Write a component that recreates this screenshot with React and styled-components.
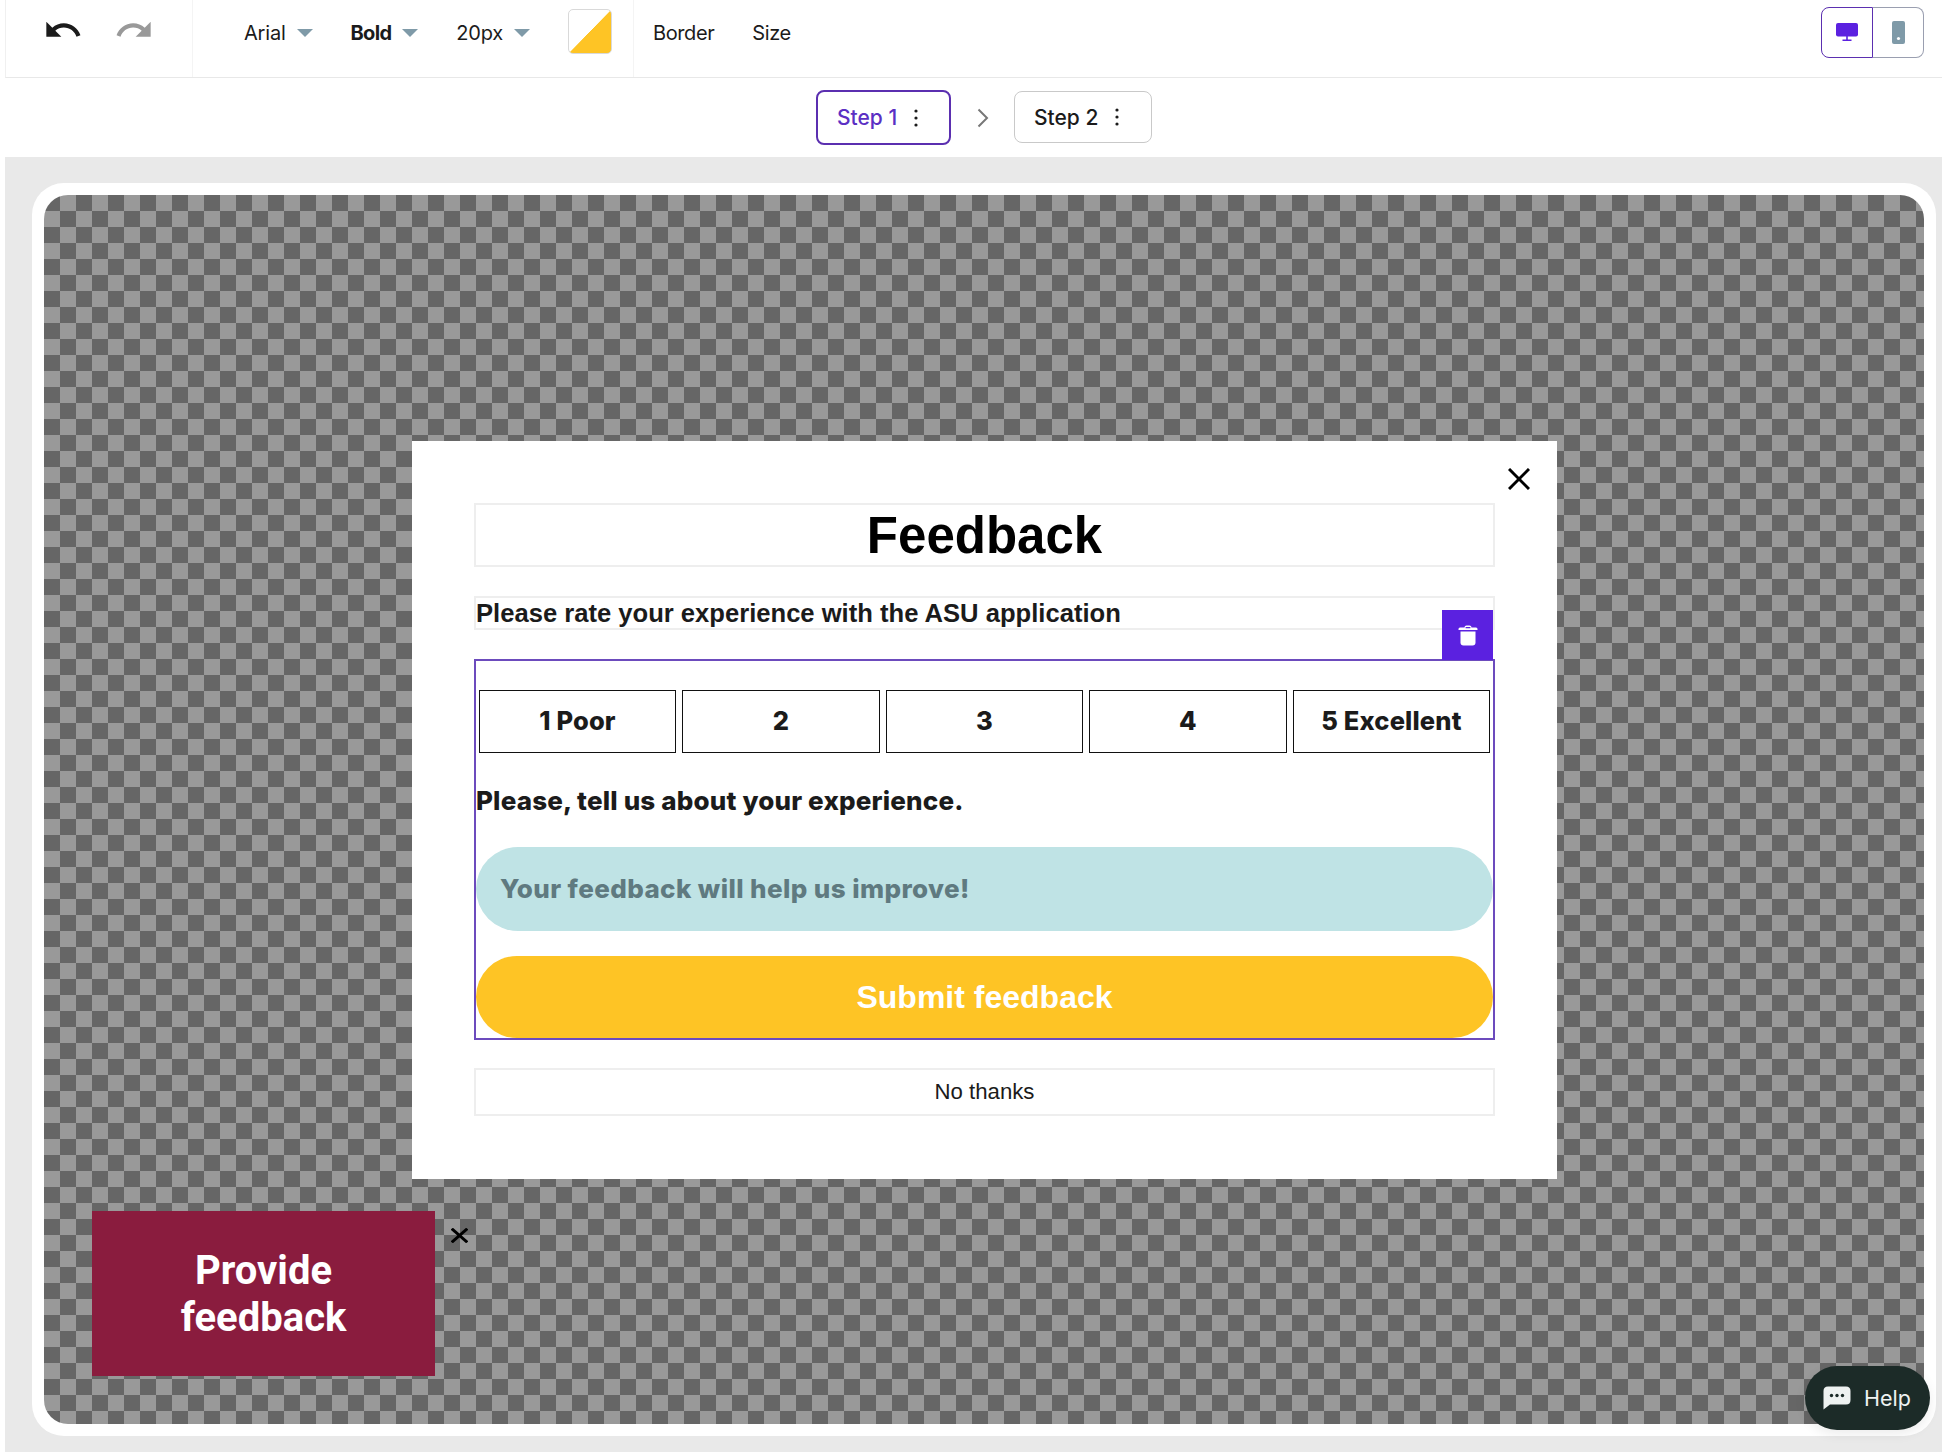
import React from "react";
import styled, { createGlobalStyle } from "styled-components";

const Global = createGlobalStyle`
  html, body { margin: 0; padding: 0; background: #fff; }
  * { box-sizing: border-box; }
  #root { width: 1942px; height: 1452px; }
`;

const Page = styled.div`
  width: 1942px;
  height: 1452px;
  padding-left: 5px;
  background: #fff;
  display: flex;
  flex-direction: column;
  font-family: Inter, "Liberation Sans", sans-serif;
  color: #1b1b1b;
  overflow: hidden;
`;

const Toolbar = styled.header`
  height: 78px;
  flex: none;
  display: flex;
  border-left: 1px solid #f0f0f0;
  border-bottom: 1px solid #e8e8e8;
`;

const HistoryGroup = styled.div`
  width: 187px;
  display: flex;
  align-items: center;
  gap: 31px;
  padding: 0 0 17px 37px;
  border-right: 1px solid #f4f4f4;
`;

const FontGroup = styled.div`
  width: 441px;
  display: flex;
  align-items: center;
  padding: 0 0 11px 51px;
  border-right: 1px solid #f4f4f4;
`;

const Select = styled.div`
  display: flex;
  align-items: center;
  gap: 11px;
  margin-right: 38px;
  font-size: 20px;
  letter-spacing: ${(p) => (p.$bold ? "-0.7px" : "-0.2px")};
  font-weight: ${(p) => (p.$bold ? 700 : 400)};
`;

const Caret = styled.span`
  width: 0;
  height: 0;
  border-left: 8px solid transparent;
  border-right: 8px solid transparent;
  border-top: 8px solid #7f9aa8;
`;

const Swatch = styled.div`
  width: 44px;
  height: 45px;
  margin-bottom: 3px;
  border: 1px solid #d9d9d9;
  border-radius: 5px;
  background: linear-gradient(to bottom right, #fff 0 49.5%, #fec425 50.5% 100%);
`;

const SizeGroup = styled.div`
  display: flex;
  align-items: center;
  gap: 38px;
  padding: 0 0 11px 19px;
  font-size: 20px;
  letter-spacing: -0.4px;
`;

const DeviceToggle = styled.div`
  margin: 7px 18px 0 auto;
  width: 103px;
  height: 51px;
  display: flex;
`;

const DeviceButton = styled.div`
  width: ${(p) => (p.$active ? "52px" : "51px")};
  display: flex;
  align-items: center;
  justify-content: center;
  border: 1px solid ${(p) => (p.$active ? "#5b2fb0" : "#9a9fb0")};
  border-left-width: ${(p) => (p.$active ? "1px" : "0")};
  border-radius: ${(p) => (p.$active ? "8px 0 0 8px" : "0 8px 8px 0")};
`;

const StepBar = styled.nav`
  height: 79px;
  flex: none;
  display: flex;
  align-items: center;
  justify-content: center;
  gap: 25.5px;
  padding-left: 21px;
`;

const Step = styled.div`
  width: ${(p) => (p.$active ? "135px" : "138px")};
  height: ${(p) => (p.$active ? "55px" : "52px")};
  margin-bottom: ${(p) => (p.$active ? "0" : "1px")};
  display: flex;
  align-items: center;
  gap: 16px;
  padding-left: 19px;
  border: ${(p) => (p.$active ? "2px solid #5b2fb0" : "1px solid #c9c9c9")};
  border-radius: 8px;
  font-size: 21px;
  font-weight: 500;
  color: ${(p) => (p.$active ? "#5b2fc4" : "#1b1b1b")};
`;

const Canvas = styled.main`
  flex: 1;
  position: relative;
  background: #e9e9e9;
  padding: 26px 6px 16px 27px;
`;

const Card = styled.div`
  height: 100%;
  padding: 12px;
  background: #fff;
  border-radius: 32px;
`;

const Board = styled.div`
  position: relative;
  height: 100%;
  border-radius: 24px;
  overflow: hidden;
  background: repeating-conic-gradient(#999 0 25%, #666 0 50%) 0 0 / 32px 32px;
`;

const Modal = styled.section`
  position: absolute;
  left: 368px;
  top: 246px;
  width: 1145px;
  height: 738px;
  padding: 62px 62px 0;
  background: #fff;
  display: flex;
  flex-direction: column;
  gap: 29px;
`;

const CloseButton = styled.div`
  position: absolute;
  left: 1096px;
  top: 27px;
  width: 22px;
  height: 22px;
  display: flex;
`;

const TitleBox = styled.div`
  height: 64px;
  flex: none;
  display: flex;
  align-items: center;
  justify-content: center;
  border: 2px solid #eee;
  font: 700 51px/1 "Liberation Sans", Arial, sans-serif;
  color: #000;
`;

const SubtitleBox = styled.div`
  height: 34px;
  flex: none;
  display: flex;
  align-items: center;
  padding-top: 2px;
  border: 2px solid #eee;
  font: 700 25.6px/1 "Liberation Sans", Arial, sans-serif;
  color: #1b1b1b;
`;

const FormBox = styled.div`
  position: relative;
  height: 381px;
  flex: none;
  margin-bottom: -1px;
  border: 2px solid #6c4bbd;
  display: flex;
  flex-direction: column;
  padding-top: 29px;
`;

const DeleteTab = styled.div`
  position: absolute;
  right: 0;
  top: -51px;
  width: 51px;
  height: 50px;
  background: #5b21e0;
  display: flex;
  align-items: center;
  justify-content: center;
`;

const RatingRow = styled.div`
  display: grid;
  grid-template-columns: repeat(5, 1fr);
  gap: 6.4px;
  padding: 0 3px;
`;

const RatingCell = styled.div`
  height: 63px;
  display: flex;
  align-items: center;
  justify-content: center;
  padding-bottom: 2px;
  border: 1.5px solid #111;
  font-size: 25.5px;
  font-weight: 800;
  letter-spacing: 0.15px;
  color: #1b1b1b;
`;

const Question = styled.div`
  height: 38px;
  margin-top: 29px;
  display: flex;
  align-items: center;
  padding-bottom: 1px;
  font-size: 26px;
  font-weight: 800;
  letter-spacing: 0.17px;
  color: #1b1b1b;
`;

const FeedbackInput = styled.div`
  height: 84px;
  margin-top: 27px;
  display: flex;
  align-items: center;
  padding: 0 0 2px 24px;
  border-radius: 42px;
  background: #bfe3e5;
  font-size: 26px;
  font-weight: 800;
  letter-spacing: 0.4px;
  color: #5f7a80;
`;

const SubmitButton = styled.div`
  height: 82px;
  margin-top: 25px;
  display: flex;
  align-items: center;
  justify-content: center;
  border-radius: 41px;
  background: #fec425;
  font: 700 32px/1 "Liberation Sans", Arial, sans-serif;
  color: #fff;
`;

const DismissBox = styled.div`
  height: 48px;
  flex: none;
  display: flex;
  align-items: center;
  justify-content: center;
  border: 2px solid #eee;
  font: 400 22.2px/1 "Liberation Sans", Arial, sans-serif;
  color: #1b1b1b;
`;

const Teaser = styled.div`
  position: absolute;
  left: 48px;
  top: 1016px;
  width: 343px;
  height: 165px;
  background: #8a1c3e;
  display: flex;
  align-items: center;
  justify-content: center;
  text-align: center;
  font: 700 40px/47px Roboto, "Liberation Sans", sans-serif;
  color: #fff;
`;

const TeaserClose = styled.div`
  position: absolute;
  right: -33px;
  top: 17px;
  display: flex;
`;

const HelpButton = styled.div`
  position: absolute;
  right: 12px;
  bottom: 22px;
  width: 125px;
  height: 64px;
  display: flex;
  align-items: center;
  gap: 13px;
  padding-left: 18px;
  border-radius: 32px;
  background: #1c2b28;
  box-shadow: 0 4px 12px rgba(0, 0, 0, 0.08);
  font-size: 21.5px;
  color: #eef2f1;
`;

const UndoIcon = ({ color, flip }) => (
  <svg width="40" height="40" viewBox="0 0 24 24" fill={color}>
    {flip ? (
      <path d="M18.4 10.6C16.55 8.99 14.15 8 11.5 8c-4.65 0-8.58 3.03-9.96 7.22L3.9 16c1.05-3.19 4.05-5.5 7.6-5.5 1.95 0 3.73.72 5.12 1.88L13 16h9V7l-3.6 3.6z" />
    ) : (
      <path d="M12.5 8c-2.65 0-5.05.99-6.9 2.6L2 7v9h9l-3.62-3.62c1.39-1.16 3.16-1.88 5.12-1.88 3.54 0 6.55 2.31 7.6 5.5l2.37-.78C21.08 11.03 17.15 8 12.5 8z" />
    )}
  </svg>
);

const Kebab = () => (
  <svg width="6" height="20" viewBox="0 0 6 20" fill="#1b1b1b">
    <circle cx="3" cy="3" r="1.6" />
    <circle cx="3" cy="10" r="1.6" />
    <circle cx="3" cy="17" r="1.6" />
  </svg>
);

const Chevron = () => (
  <svg width="12" height="20" viewBox="0 0 12 20" fill="none" stroke="#777" strokeWidth="2">
    <polyline points="1.5,1.5 10,10 1.5,18.5" />
  </svg>
);

const Monitor = () => (
  <svg width="24" height="20" viewBox="0 0 24 20" fill="#5b21e0">
    <rect x="1" y="0" width="22" height="13.5" rx="2" />
    <rect x="11.2" y="13" width="1.6" height="4" />
    <rect x="7.5" y="16.5" width="9" height="1.5" />
  </svg>
);

const Phone = () => (
  <svg width="13" height="23" viewBox="0 0 13 23">
    <rect width="13" height="23" rx="2" fill="#7f9aa8" />
    <circle cx="6.5" cy="17.5" r="1.6" fill="#fff" />
  </svg>
);

const Trash = () => (
  <svg width="20" height="21" viewBox="0 0 20 21" fill="#fff">
    <path d="M6.5 2.5 Q6.5 0.5 8.5 0.5 H11.5 Q13.5 0.5 13.5 2.5 H18 Q19.5 2.5 19.5 4 V5 H0.5 V4 Q0.5 2.5 2 2.5 Z" />
    <path d="M2.5 6.5 H17.5 V17.5 Q17.5 20.5 14.5 20.5 H5.5 Q2.5 20.5 2.5 17.5 Z" />
    <rect x="7.5" y="2" width="5" height="1.2" rx="0.5" fill="#5b21e0" />
  </svg>
);

const Cross = ({ size, width, h }) => (
  <svg width={size} height={h || size} viewBox="0 0 22 22" preserveAspectRatio="none" stroke="#000" strokeWidth={width} fill="none">
    <line x1="1" y1="1" x2="21" y2="21" />
    <line x1="21" y1="1" x2="1" y2="21" />
  </svg>
);

const ChatIcon = () => (
  <svg width="28" height="24" viewBox="0 0 28 24">
    <path d="M5 0.5 H23 Q27.5 0.5 27.5 5 V14 Q27.5 18.5 23 18.5 H7 L0.5 23.5 V5 Q0.5 0.5 5 0.5 Z" fill="#eef2f1" />
    <circle cx="8.5" cy="9.5" r="1.7" fill="#1c2b28" />
    <circle cx="14" cy="9.5" r="1.7" fill="#1c2b28" />
    <circle cx="19.5" cy="9.5" r="1.7" fill="#1c2b28" />
  </svg>
);

export default function App() {
  return (
    <Page>
      <Global />
      <Toolbar>
        <HistoryGroup>
          <UndoIcon color="#1b1b1b" />
          <UndoIcon color="#999" flip />
        </HistoryGroup>
        <FontGroup>
          <Select>Arial<Caret /></Select>
          <Select $bold>Bold<Caret /></Select>
          <Select>20px<Caret /></Select>
          <Swatch />
        </FontGroup>
        <SizeGroup>
          <span>Border</span>
          <span>Size</span>
        </SizeGroup>
        <DeviceToggle>
          <DeviceButton $active><Monitor /></DeviceButton>
          <DeviceButton><Phone /></DeviceButton>
        </DeviceToggle>
      </Toolbar>
      <StepBar>
        <Step $active>Step 1 <Kebab /></Step>
        <Chevron />
        <Step>Step 2 <Kebab /></Step>
      </StepBar>
      <Canvas>
        <Card>
          <Board>
            <Modal>
              <CloseButton><Cross size={22} width={3} /></CloseButton>
              <TitleBox>Feedback</TitleBox>
              <SubtitleBox>Please rate your experience with the ASU application</SubtitleBox>
              <FormBox>
                <DeleteTab><Trash /></DeleteTab>
                <RatingRow>
                  <RatingCell>1 Poor</RatingCell>
                  <RatingCell>2</RatingCell>
                  <RatingCell>3</RatingCell>
                  <RatingCell>4</RatingCell>
                  <RatingCell>5 Excellent</RatingCell>
                </RatingRow>
                <Question>Please, tell us about your experience.</Question>
                <FeedbackInput>Your feedback will help us improve!</FeedbackInput>
                <SubmitButton>Submit feedback</SubmitButton>
              </FormBox>
              <DismissBox>No thanks</DismissBox>
            </Modal>
            <Teaser>
              <span>Provide<br />feedback</span>
              <TeaserClose><Cross size={17} h={15} width={4} /></TeaserClose>
            </Teaser>
          </Board>
        </Card>
        <HelpButton><ChatIcon />Help</HelpButton>
      </Canvas>
    </Page>
  );
}
